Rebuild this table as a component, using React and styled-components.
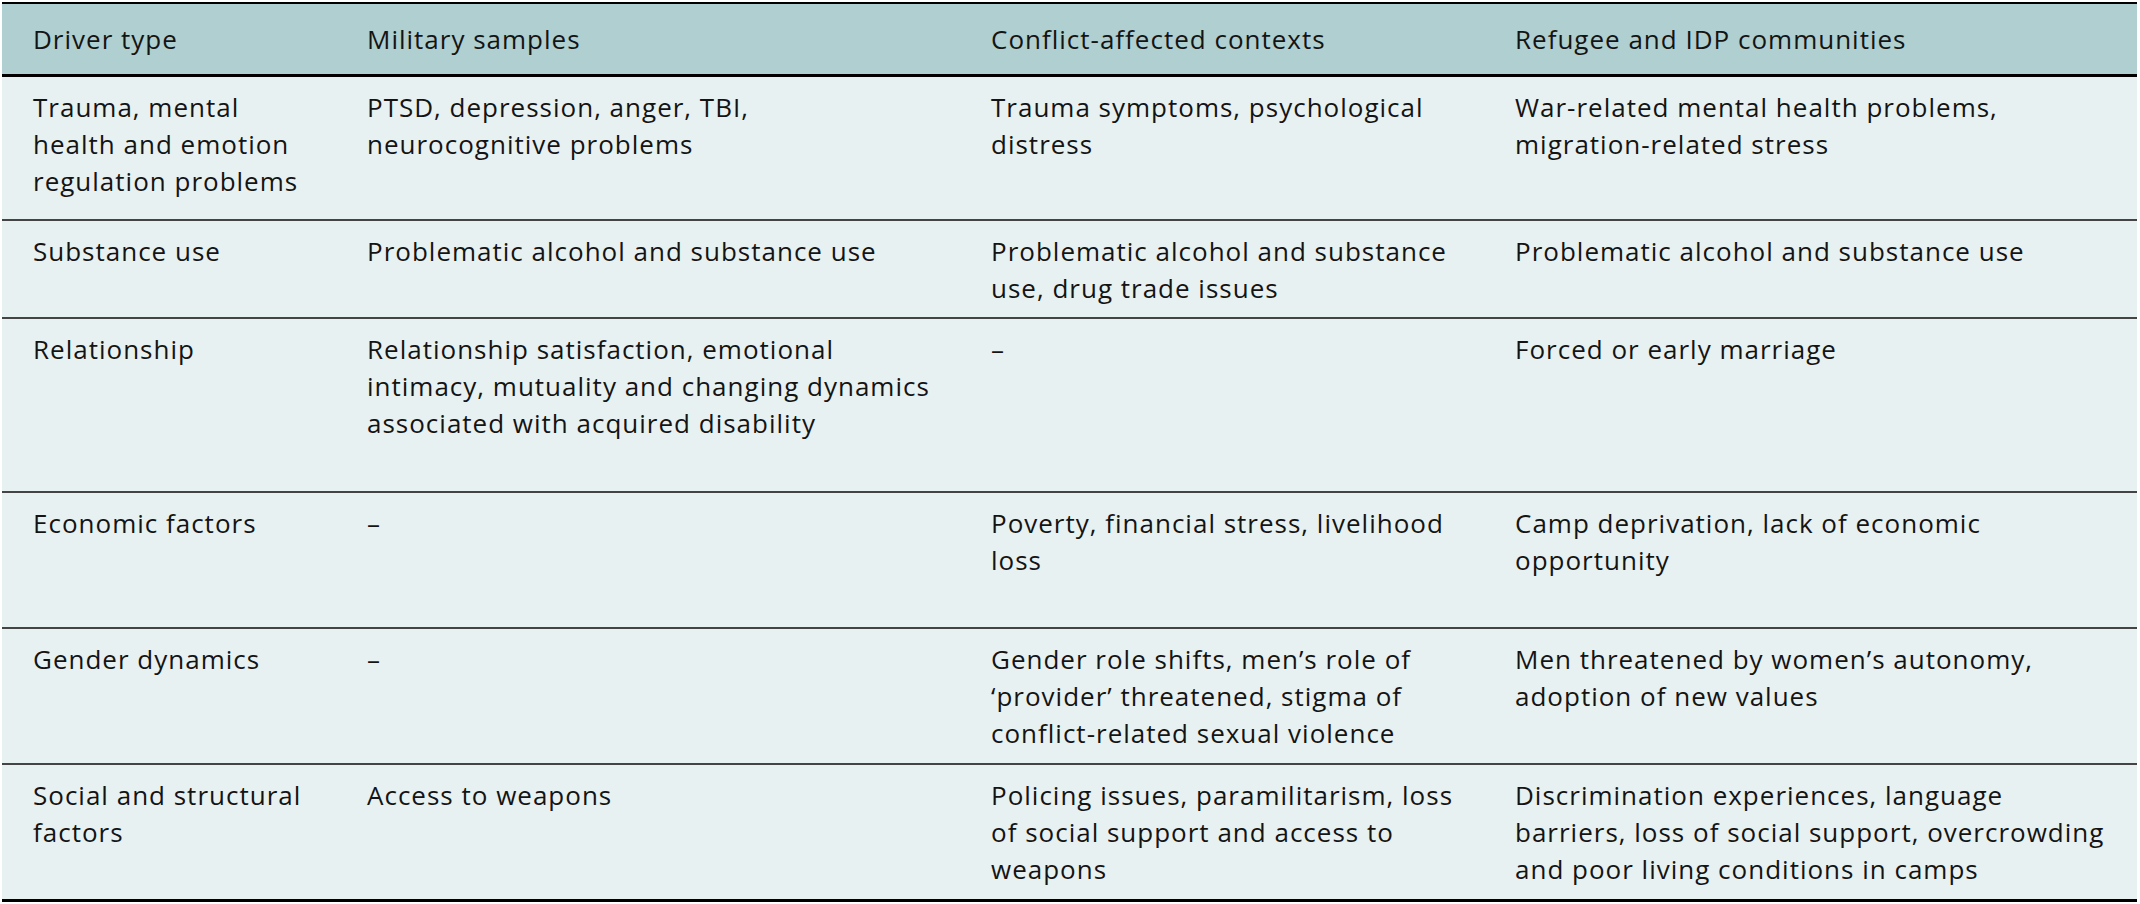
import React from "react";
import styled, { createGlobalStyle } from "styled-components";

const GlobalStyle = createGlobalStyle`
  html, body {
    margin: 0;
    padding: 0;
    background: #ffffff;
  }
  body {
    font-family: "Open Sans", "Noto Sans", sans-serif;
    color: #141414;
  }
`;

const Table = styled.div`
  width: 2135px;
  margin: 2px 0 0 2px;
  border-top: 2px solid #000;
  border-bottom: 3px solid #000;
`;

const Row = styled.div`
  display: grid;
  grid-template-columns: 334px 624px 524px 653px;
  height: ${(p) => p.$height}px;
  background: ${(p) => (p.$head ? "#afcfd1" : "#e8f1f1")};
  border-bottom: ${(p) =>
    p.$head ? "3px solid #000" : p.$last ? "none" : "2px solid #444"};
`;

const Cell = styled.div`
  padding: ${(p) => (p.$head ? "17px" : "12px")} 8px 0 31px;
  font-size: 26px;
  letter-spacing: 1px;
  line-height: 37px;
`;

const Line = styled.span`
  display: block;
  white-space: nowrap;
`;

const header = [
  "Driver type",
  "Military samples",
  "Conflict-affected contexts",
  "Refugee and IDP communities",
];

const rows = [
  {
    height: 142,
    cells: [
      ["Trauma, mental", "health and emotion", "regulation problems"],
      ["PTSD, depression, anger, TBI,", "neurocognitive problems"],
      ["Trauma symptoms, psychological", "distress"],
      ["War-related mental health problems,", "migration-related stress"],
    ],
  },
  {
    height: 96,
    cells: [
      ["Substance use"],
      ["Problematic alcohol and substance use"],
      ["Problematic alcohol and substance", "use, drug trade issues"],
      ["Problematic alcohol and substance use"],
    ],
  },
  {
    height: 172,
    cells: [
      ["Relationship"],
      [
        "Relationship satisfaction, emotional",
        "intimacy, mutuality and changing dynamics",
        "associated with acquired disability",
      ],
      ["–"],
      ["Forced or early marriage"],
    ],
  },
  {
    height: 134,
    cells: [
      ["Economic factors"],
      ["–"],
      ["Poverty, financial stress, livelihood", "loss"],
      ["Camp deprivation, lack of economic", "opportunity"],
    ],
  },
  {
    height: 134,
    cells: [
      ["Gender dynamics"],
      ["–"],
      [
        "Gender role shifts, men’s role of",
        "‘provider’ threatened, stigma of",
        "conflict-related sexual violence",
      ],
      ["Men threatened by women’s autonomy,", "adoption of new values"],
    ],
  },
  {
    height: 134,
    cells: [
      ["Social and structural", "factors"],
      ["Access to weapons"],
      [
        "Policing issues, paramilitarism, loss",
        "of social support and access to",
        "weapons",
      ],
      [
        "Discrimination experiences, language",
        "barriers, loss of social support, overcrowding",
        "and poor living conditions in camps",
      ],
    ],
  },
];

const App = () => {
  return (
    <>
      <GlobalStyle />
      <Table>
        <Row $head $height={70}>
          {header.map((h) => (
            <Cell $head key={h}>
              <Line>{h}</Line>
            </Cell>
          ))}
        </Row>
        {rows.map((r, i) => (
          <Row key={i} $height={r.height} $last={i === rows.length - 1}>
            {r.cells.map((lines, j) => (
              <Cell key={j}>
                {lines.map((l, k) => (
                  <Line key={k}>{l}</Line>
                ))}
              </Cell>
            ))}
          </Row>
        ))}
      </Table>
    </>
  );
};

export default App;
